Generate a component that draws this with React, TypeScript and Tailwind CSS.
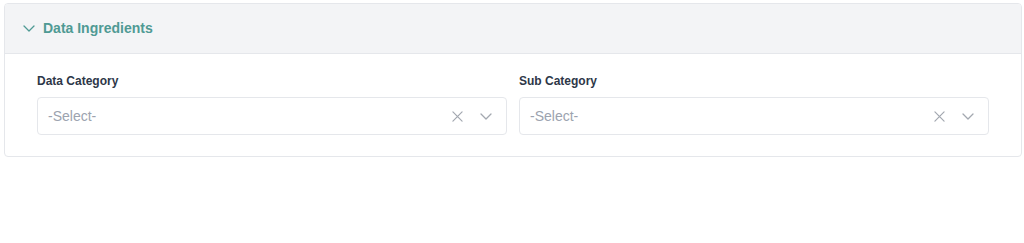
const fields = ["Data Category", "Sub Category"];

function Chevron({ className }: { className?: string }) {
  return (
    <svg viewBox="0 0 12 7" className={className} fill="none" stroke="currentColor" strokeWidth={1.3} strokeLinecap="round" strokeLinejoin="round">
      <path d="M1 1l5 5 5-5" />
    </svg>
  );
}

function Cross({ className }: { className?: string }) {
  return (
    <svg viewBox="0 0 12 12" className={className} fill="none" stroke="currentColor" strokeWidth={1.3} strokeLinecap="round">
      <path d="M1 1l10 10M11 1L1 11" />
    </svg>
  );
}

function SelectBox() {
  return (
    <div className="flex h-[38px] items-center rounded-[4px] border border-[#e5e7eb] bg-white pl-[10px] pr-[14px]">
      <span className="flex-1 text-[14px] text-[#9ca3af]">-Select-</span>
      <Cross className="h-[11px] w-[11px] text-[#a3a8b0]" />
      <Chevron className="ml-[17px] h-[7px] w-[12px] text-[#a3a8b0]" />
    </div>
  );
}

export default function App() {
  return (
    <div className="bg-white pl-[4px] pr-[2px] pt-[3px] font-['Liberation_Sans',Arial,sans-serif]" style={{ height: 243 }}>
      <div className="overflow-hidden rounded-[4px] border border-[#e5e7eb]">
        <div className="flex h-[50px] items-center gap-[8px] border-b border-[#e5e7eb] bg-[#f3f4f6] pl-[18px]">
          <Chevron className="h-[7px] w-[12px] text-[#4f9a94]" />
          <span className="text-[14px] font-bold text-[#4f9a94]">Data Ingredients</span>
        </div>
        <div className="grid grid-cols-2 gap-[12px] px-[32px] pt-[18px] pb-[21px]">
          {fields.map((f) => (
            <div key={f} className="flex flex-col">
              <label className="mb-[7px] text-[12px] font-bold text-[#2d3748]">{f}</label>
              <SelectBox />
            </div>
          ))}
        </div>
      </div>
    </div>
  );
}
